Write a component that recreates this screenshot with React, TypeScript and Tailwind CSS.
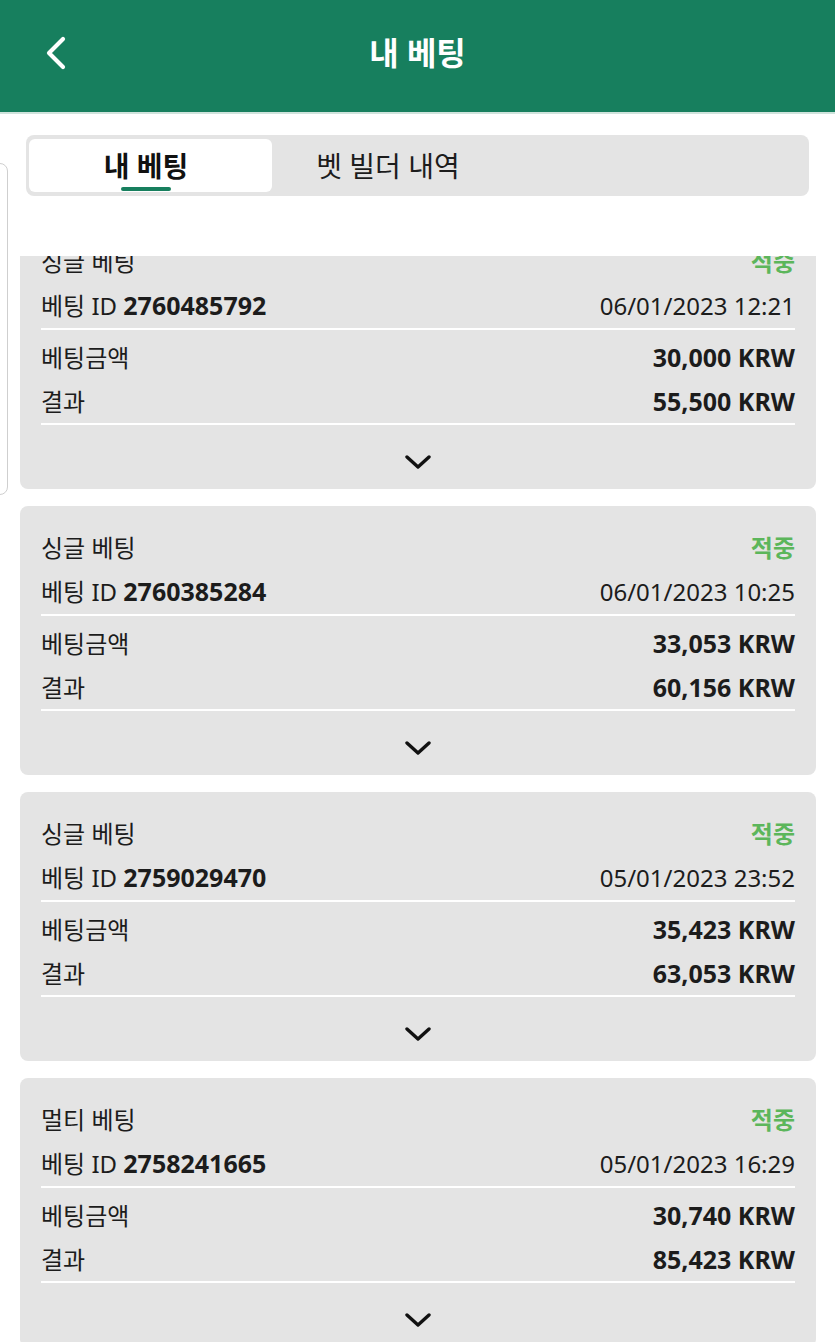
import React from 'react';

type Bet = {
  kind: string;
  id: string;
  date: string;
  stake: string;
  result: string;
};

const bets: Bet[] = [
  { kind: '싱글 베팅', id: '2760485792', date: '06/01/2023 12:21', stake: '30,000 KRW', result: '55,500 KRW' },
  { kind: '싱글 베팅', id: '2760385284', date: '06/01/2023 10:25', stake: '33,053 KRW', result: '60,156 KRW' },
  { kind: '싱글 베팅', id: '2759029470', date: '05/01/2023 23:52', stake: '35,423 KRW', result: '63,053 KRW' },
  { kind: '멀티 베팅', id: '2758241665', date: '05/01/2023 16:29', stake: '30,740 KRW', result: '85,423 KRW' },
];

function BetCard({ bet }: { bet: Bet }) {
  return (
    <div className="rounded-lg bg-[#e4e4e4] px-[21px] pt-[21px] text-[24px] text-[#1c1c1c]">
      <div className="flex h-[42px] items-center justify-between">
        <span>{bet.kind}</span>
        <span className="font-bold text-[#5cb65b]">적중</span>
      </div>
      <div className="flex h-[45px] items-center justify-between">
        <span>
          베팅 ID <span className="text-[25px] font-bold">{bet.id}</span>
        </span>
        <span>{bet.date}</span>
      </div>
      <div className="h-[2px] bg-white" />
      <div className="mt-[6px] flex h-[44px] items-center justify-between">
        <span>베팅금액</span>
        <span className="text-[25px] font-bold">{bet.stake}</span>
      </div>
      <div className="flex h-[43px] items-center justify-between">
        <span>결과</span>
        <span className="text-[25px] font-bold">{bet.result}</span>
      </div>
      <div className="h-[2px] bg-white" />
      <div className="flex h-[64px] items-center justify-center pt-[10px]">
        <svg width="26" height="16" viewBox="0 0 26 16" fill="none">
          <polyline points="2,3 13,13 24,3" stroke="#111" strokeWidth="3.4" strokeLinecap="round" strokeLinejoin="round" />
        </svg>
      </div>
    </div>
  );
}

export default function App() {
  return (
    <div className="relative h-[1342px] w-[835px] overflow-hidden bg-white font-['Noto_Sans','Noto_Sans_CJK_KR',sans-serif]">
      {/* header */}
      <div className="relative flex h-[112px] items-center justify-center bg-[#177f5e]">
        <button className="absolute left-[44px] top-[36px]">
          <svg width="24" height="34" viewBox="0 0 24 34" fill="none">
            <polyline points="19,3 5,17 19,31" stroke="white" strokeWidth="4.2" strokeLinecap="round" strokeLinejoin="round" />
          </svg>
        </button>
        <h1 className="mb-[6px] text-[32px] font-bold text-white">내 베팅</h1>
      </div>
      <div className="h-[2px] bg-[#cfe3dc]" />

      {/* stray panel edge */}
      <div className="absolute left-[-40px] top-[163px] h-[332px] w-[48px] rounded-lg border border-[#cfcfcf] bg-white" />

      {/* tabs */}
      <div className="relative mx-[26px] mt-[21px] flex h-[61px] items-center rounded-lg bg-[#e4e4e4] px-[3px]">
        <div className="relative flex h-[53px] w-[243px] items-center justify-center rounded-md bg-white pr-[9px]">
          <span className="text-[28px] font-bold text-[#111]">내 베팅</span>
          <div className="absolute bottom-[1px] left-[92px] h-[4px] w-[50px] rounded-full bg-[#177f5e]" />
        </div>
        <div className="flex h-[53px] w-[232px] items-center justify-center">
          <span className="text-[28px] text-[#1c1c1c]">벳 빌더 내역</span>
        </div>
      </div>

      {/* list */}
      <div className="mt-[60px] h-[1086px] overflow-hidden">
        <div className="-mt-[36px] flex flex-col gap-[17px] pl-[20px] pr-[19px]">
          {bets.map((b) => (
            <BetCard key={b.id} bet={b} />
          ))}
        </div>
      </div>
    </div>
  );
}
